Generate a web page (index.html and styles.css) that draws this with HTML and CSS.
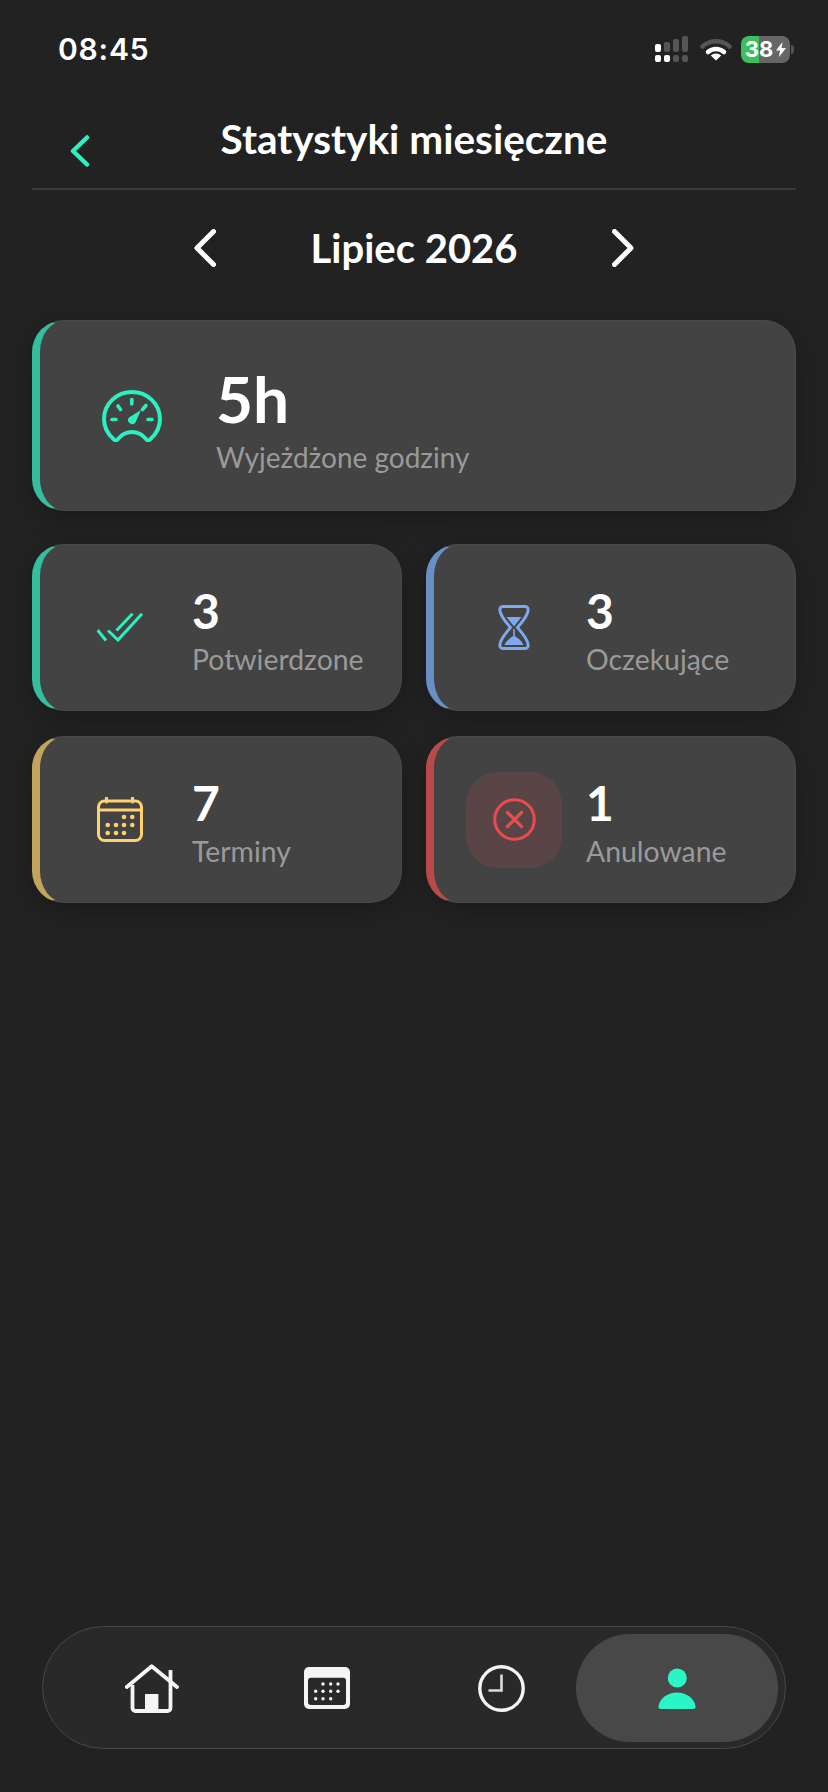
FILE: index.html
```html
<!DOCTYPE html>
<html lang="pl">
<head>
    <meta charset="UTF-8">
    <meta name="viewport" content="width=device-width, initial-scale=1.0">
    <title>Statystyki miesięczne</title>
    <link rel="stylesheet" href="styles.css">
</head>
<body>
    <div class="page">
        <!-- Status bar -->
        <div class="status-bar">
            <span class="time">08:45</span>
            <div class="status-icons">
                <svg class="signal" width="33" height="26" viewBox="0 0 33 26">
                    <rect x="0" y="8" width="6" height="8" rx="2" fill="#fff"/>
                    <rect x="9" y="6" width="6" height="10" rx="2" fill="#555"/>
                    <rect x="18" y="3" width="6" height="13" rx="2" fill="#555"/>
                    <rect x="27" y="0" width="6" height="16" rx="2" fill="#555"/>
                    <rect x="0" y="19" width="6" height="7" rx="2" fill="#fff"/>
                    <rect x="9" y="19" width="6" height="7" rx="2" fill="#fff"/>
                    <rect x="18" y="19" width="6" height="7" rx="2" fill="#555"/>
                    <rect x="27" y="19" width="6" height="7" rx="2" fill="#555"/>
                </svg>
                <svg class="wifi" width="32" height="24" viewBox="0 0 32 24">
                    <path d="M2.5 9.5A20 20 0 0 1 29.5 9.5" fill="none" stroke="#555" stroke-width="4.5" stroke-linecap="round"/>
                    <path d="M8 15A12 12 0 0 1 24 15" fill="none" stroke="#fff" stroke-width="4.5" stroke-linecap="round"/>
                    <path d="M16 23.5L10.8 18.6A7.5 7.5 0 0 1 21.2 18.6Z" fill="#fff"/>
                </svg>
                <div class="battery">
                    <span class="battery-level">38</span>
                    <svg width="10" height="15" viewBox="0 0 10 15">
                        <path d="M6.5 0L0 8.5H4L3 15L10 6H5.5Z" fill="#fff"/>
                    </svg>
                </div>
                <span class="battery-nib"></span>
            </div>
        </div>

        <!-- Header -->
        <header class="header">
            <svg class="back" width="20" height="32" viewBox="0 0 20 32">
                <polyline points="17,2.5 3,16 17,29.5" fill="none" stroke="#2bf0c0" stroke-width="4.5" stroke-linecap="round" stroke-linejoin="round"/>
            </svg>
            <h1 class="title">Statystyki miesięczne</h1>
        </header>

        <!-- Month switcher -->
        <div class="month-row">
            <svg width="22" height="38" viewBox="0 0 22 38">
                <polyline points="19.5,2.5 3,19 19.5,35.5" fill="none" stroke="#fff" stroke-width="5" stroke-linecap="round" stroke-linejoin="round"/>
            </svg>
            <span class="month">Lipiec 2026</span>
            <svg width="22" height="38" viewBox="0 0 22 38">
                <polyline points="2.5,2.5 19,19 2.5,35.5" fill="none" stroke="#fff" stroke-width="5" stroke-linecap="round" stroke-linejoin="round"/>
            </svg>
        </div>

        <!-- Stat cards -->
        <div class="stats">
            <div class="card card-wide accent-green">
                <div class="card-icon">
                    <svg width="60" height="52" viewBox="0 0 60 52">
                        <path d="M12 49.5C5.5 44 2 36.5 2 29A28 27 0 0 1 58 29C58 36.5 54.5 44 48 49.5C47 50.7 45 50.5 44 49C40 44 35 42 30 42C25 42 20 44 16 49C15 50.5 13 50.7 12 49.5Z" fill="none" stroke="#2bf0c0" stroke-width="4" stroke-linejoin="round"/>
                        <g stroke="#2bf0c0" stroke-width="3.6" stroke-linecap="round">
                            <line x1="29.8" y1="9.5" x2="29.8" y2="14"/>
                            <line x1="16" y1="16" x2="18.5" y2="19.5"/>
                            <line x1="44" y1="15.5" x2="40.5" y2="19.5"/>
                            <line x1="10" y1="29.5" x2="14" y2="29.5"/>
                            <line x1="46" y1="29.5" x2="50" y2="29.5"/>
                        </g>
                        <path d="M39 20L33.5 32.5A4 4 0 1 1 27 27.5Z" fill="#2bf0c0"/>
                    </svg>
                </div>
                <div class="card-text">
                    <span class="value value-big">5h</span>
                    <span class="label">Wyjeżdżone godziny</span>
                </div>
            </div>

            <div class="card accent-green">
                <div class="card-icon">
                    <svg width="46" height="29" viewBox="0 0 46 29">
                        <g fill="none" stroke="#2bf0c0" stroke-width="3">
                            <line x1="0.5" y1="17" x2="9" y2="27.5"/>
                            <line x1="19.5" y1="17.5" x2="35.5" y2="0.8"/>
                            <polyline points="11,17.5 21,27 45,0.8"/>
                        </g>
                    </svg>
                </div>
                <div class="card-text">
                    <span class="value">3</span>
                    <span class="label">Potwierdzone</span>
                </div>
            </div>

            <div class="card accent-blue">
                <div class="card-icon">
                    <svg width="32" height="45" viewBox="0 0 32 45">
                        <path d="M5 1.5H27C29.5 1.5 30.5 3.5 30 6C29 12 24 17 19.5 22.5C24 28 29 33 30 39C30.5 41.5 29.5 43.5 27 43.5H5C2.5 43.5 1.5 41.5 2 39C3 33 8 28 12.5 22.5C8 17 3 12 2 6C1.5 3.5 2.5 1.5 5 1.5Z" fill="none" stroke="#7ea9f0" stroke-width="3"/>
                        <path d="M8.5 12H23.5L16 21.5Z" fill="#7ea9f0"/>
                        <path d="M15.2 24H16.8V31C20 33 24 36 25.5 40H6.5C8 36 12 33 15.2 31Z" fill="#7ea9f0"/>
                    </svg>
                </div>
                <div class="card-text">
                    <span class="value">3</span>
                    <span class="label">Oczekujące</span>
                </div>
            </div>

            <div class="card accent-gold">
                <div class="card-icon">
                    <svg width="46" height="45" viewBox="0 0 46 45">
                        <rect x="1.5" y="4" width="43" height="39.5" rx="6" fill="none" stroke="#ffd06e" stroke-width="3"/>
                        <line x1="1.5" y1="13" x2="44.5" y2="13" stroke="#ffd06e" stroke-width="3"/>
                        <line x1="9.5" y1="0.5" x2="9.5" y2="5" stroke="#ffd06e" stroke-width="3" stroke-linecap="round"/>
                        <line x1="35.5" y1="0.5" x2="35.5" y2="5" stroke="#ffd06e" stroke-width="3" stroke-linecap="round"/>
                        <g fill="#ffd06e">
                            <circle cx="27" cy="20" r="2.3"/>
                            <circle cx="35.3" cy="20" r="2.3"/>
                            <circle cx="10.7" cy="28" r="2.3"/>
                            <circle cx="19" cy="28" r="2.3"/>
                            <circle cx="27" cy="28" r="2.3"/>
                            <circle cx="35.3" cy="28" r="2.3"/>
                            <circle cx="10.7" cy="36" r="2.3"/>
                            <circle cx="19" cy="36" r="2.3"/>
                            <circle cx="27" cy="36" r="2.3"/>
                        </g>
                    </svg>
                </div>
                <div class="card-text">
                    <span class="value">7</span>
                    <span class="label">Terminy</span>
                </div>
            </div>

            <div class="card accent-red">
                <div class="card-icon card-icon-red">
                    <svg width="43" height="43" viewBox="0 0 43 43">
                        <circle cx="21.5" cy="21.5" r="19.8" fill="none" stroke="#ec4a4f" stroke-width="3"/>
                        <path d="M14.5 14.5L28.5 28.5M28.5 14.5L14.5 28.5" stroke="#ec4a4f" stroke-width="3.2" stroke-linecap="round"/>
                    </svg>
                </div>
                <div class="card-text">
                    <span class="value">1</span>
                    <span class="label">Anulowane</span>
                </div>
            </div>
        </div>

        <!-- Bottom navigation -->
        <nav class="bottom-nav">
            <div class="nav-item">
                <svg width="54" height="49" viewBox="0 0 54 49">
                    <path d="M1.8 23L26.7 2.2L52 23" fill="none" stroke="#f5f5f5" stroke-width="3.8" stroke-linecap="round" stroke-linejoin="round"/>
                    <path d="M7.5 21V44A3 3 0 0 0 10.5 47H42.5A3 3 0 0 0 45.5 44V6" fill="none" stroke="#f5f5f5" stroke-width="3.8"/>
                    <rect x="20" y="30" width="13.4" height="17" fill="#f5f5f5"/>
                </svg>
            </div>
            <div class="nav-item">
                <svg width="46" height="42" viewBox="0 0 46 42">
                    <rect width="46" height="42" rx="5" fill="#f5f5f5"/>
                    <rect x="4" y="10.7" width="38" height="27.3" rx="3" fill="#2a2929"/>
                    <g fill="#f5f5f5">
                        <circle cx="19" cy="17" r="1.7"/>
                        <circle cx="26.7" cy="17" r="1.7"/>
                        <circle cx="34" cy="17" r="1.7"/>
                        <circle cx="11.7" cy="24.3" r="1.7"/>
                        <circle cx="19" cy="24.3" r="1.7"/>
                        <circle cx="26.7" cy="24.3" r="1.7"/>
                        <circle cx="34" cy="24.3" r="1.7"/>
                        <circle cx="11.7" cy="31.7" r="1.7"/>
                        <circle cx="19" cy="31.7" r="1.7"/>
                        <circle cx="26.7" cy="31.7" r="1.7"/>
                    </g>
                </svg>
            </div>
            <div class="nav-item">
                <svg width="47" height="47" viewBox="0 0 47 47">
                    <circle cx="23.5" cy="23.5" r="21.7" fill="none" stroke="#f5f5f5" stroke-width="3.4"/>
                    <polyline points="23.5,9.5 23.5,25.5 10.5,25.5" fill="none" stroke="#dcdcdc" stroke-width="2.6"/>
                </svg>
            </div>
            <div class="nav-item nav-item-active">
                <svg width="38" height="41" viewBox="0 0 38 41">
                    <circle cx="19.3" cy="10" r="9.5" fill="#2bf5c4"/>
                    <path d="M3 41Q0 41 .5 38C2 30 10 24.5 19 24.5S36 30 37.5 38Q38 41 35 41Z" fill="#2bf5c4"/>
                </svg>
            </div>
        </nav>
    </div>
</body>
</html>
```

FILE: styles.css
```css
body {
    margin: 0;
    background-color: #222222;
    font-family: Lato, "Noto Sans", sans-serif;
    color: #ffffff;
}

.page {
    display: flex;
    flex-direction: column;
    height: 1792px;
    overflow: hidden;
}

/* Status bar */
.status-bar {
    display: flex;
    justify-content: space-between;
    align-items: center;
    height: 98px;
    padding: 0 34px 0 58px;
}

.time {
    font-family: Inter, sans-serif;
    font-size: 30px;
    font-weight: 600;
    letter-spacing: 0.8px;
}

.status-icons {
    display: flex;
    align-items: center;
}

.wifi {
    margin-left: 12px;
}

.battery {
    display: flex;
    align-items: center;
    justify-content: center;
    gap: 3px;
    width: 49px;
    height: 27px;
    margin-left: 9px;
    border-radius: 8px;
    background: linear-gradient(90deg, #3dbf5e 18px, #666666 18px);
    font-family: Inter, sans-serif;
    font-size: 22px;
    font-weight: 700;
}

.battery-nib {
    width: 3px;
    height: 9px;
    margin-left: 1px;
    border-radius: 0 3px 3px 0;
    background-color: #555555;
}

/* Header */
.header {
    display: grid;
    grid-template-columns: 1fr auto 1fr;
    height: 92px;
    margin: 0 32px;
    border-bottom: 2px solid #3a3a3a;
    box-sizing: border-box;
}

.back {
    align-self: end;
    margin: 0 0 21px 38px;
}

.title {
    margin: 19px 0 0;
    font-size: 40.5px;
    line-height: 44px;
    font-weight: 700;
}

/* Month switcher */
.month-row {
    display: flex;
    justify-content: center;
    align-items: center;
    gap: 95px;
    height: 116px;
    margin-bottom: 14px;
}

.month {
    font-size: 40px;
    font-weight: 700;
}

/* Cards */
.stats {
    display: grid;
    grid-template-columns: 370px 370px;
    grid-template-rows: 199px 167px 167px;
    gap: 25px 24px;
    padding: 0 32px;
}

.card {
    display: flex;
    align-items: center;
    gap: 24px;
    padding-left: 32px;
    border: 1px solid #4a4a4a;
    border-left: 8px solid;
    border-radius: 32px;
    background-color: #434343;
    box-shadow: 0 6px 24px rgba(0, 0, 0, 0.25);
    box-sizing: border-box;
}

.card-wide {
    grid-column: span 2;
    margin-bottom: 8px;
    gap: 36px;
    padding-left: 44px;
}

.accent-green { border-left-color: #33be9c; }
.accent-blue { border-left-color: #6a8fc6; }
.accent-gold { border-left-color: #c2a55c; }
.accent-red { border-left-color: #b94a4a; }

.card-icon {
    display: flex;
    justify-content: center;
    align-items: center;
    flex-shrink: 0;
    width: 96px;
    height: 96px;
    border-radius: 32px;
}

.card-icon-red {
    background-color: #594545;
}

.card-text {
    display: flex;
    flex-direction: column;
    padding-top: 4px;
}

.card-wide .card-text {
    padding-top: 6px;
}

.value {
    font-size: 48px;
    line-height: 56px;
    font-weight: 700;
}

.value-big {
    font-size: 64px;
    line-height: 72px;
}

.label {
    margin-top: 3px;
    font-size: 28.4px;
    line-height: 34px;
    color: #9a9a9a;
}

.card-wide .label {
    margin-top: 5px;
    font-size: 28px;
}

/* Bottom navigation */
.bottom-nav {
    display: grid;
    grid-template-columns: repeat(4, 175px);
    justify-content: center;
    align-items: center;
    height: 123px;
    margin: auto 42px 43px;
    padding: 7px 0;
    border: 1px solid #484848;
    border-radius: 62px;
    background-color: #2a2929;
    box-sizing: border-box;
}

.nav-item {
    display: flex;
    justify-content: center;
    align-items: center;
    height: 108px;
}

.nav-item-active {
    margin: 0 -14px 0 -13px;
    border-radius: 54px;
    background-color: #484848;
}
```
